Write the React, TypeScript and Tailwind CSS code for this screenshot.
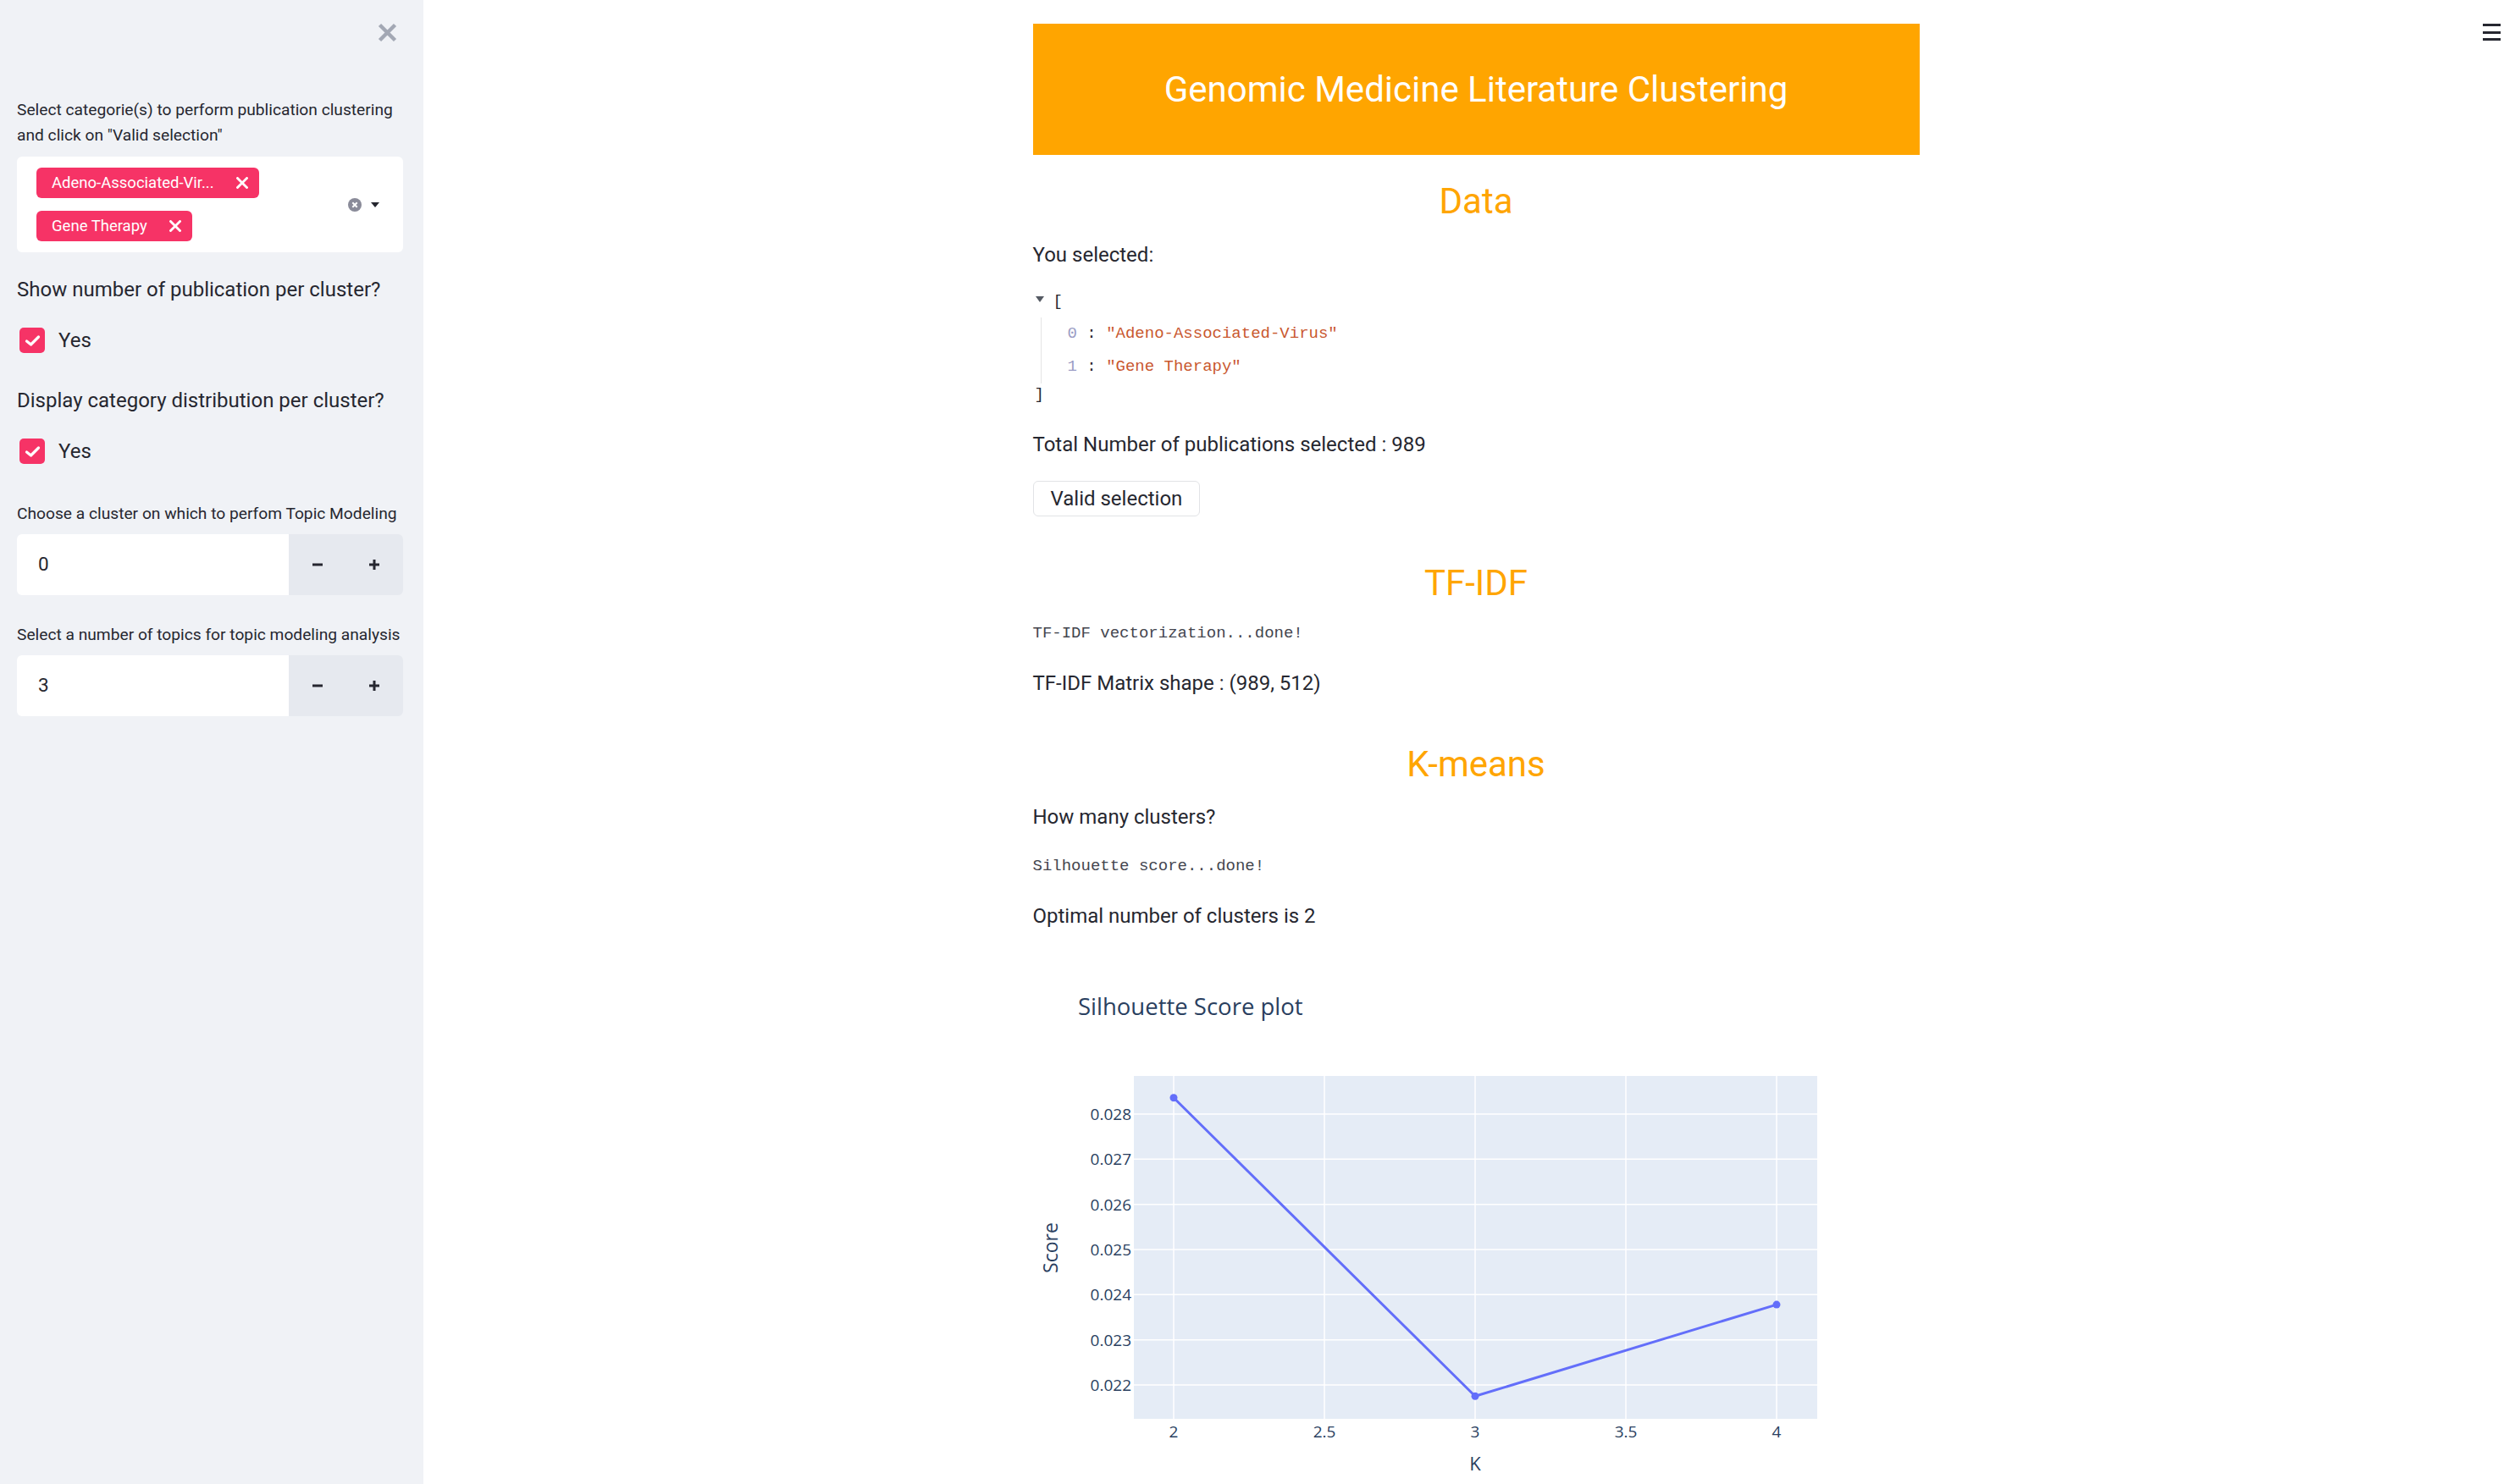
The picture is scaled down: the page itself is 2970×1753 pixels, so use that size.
import React from "react";

const PINK = "bg-[#f63366]";

const Tag = ({ label }: { label: string }) => {
    return (
        <div className={`${PINK} h-[36px] rounded-[6px] flex items-center pl-[18px] pr-[13px] gap-[26px] w-fit`}>
            <span className="text-white text-[18.5px] leading-none">{label}</span>
            <svg width="14" height="14" viewBox="0 0 14 14">
                <path d="M1.5 1.5 L12.5 12.5 M12.5 1.5 L1.5 12.5" stroke="white" strokeWidth="2.8" strokeLinecap="square" />
            </svg>
        </div>
    );
};

const CheckRow = () => {
    return (
        <div className="h-[36px] flex items-center">
            <div className={`${PINK} ml-[3px] w-[30px] h-[30px] rounded-[5px] flex items-center justify-center`}>
                <svg width="19" height="15" viewBox="0 0 19 15">
                    <path d="M2.5 8 L7.5 12 L16.5 3" fill="none" stroke="white" strokeWidth="3.2" strokeLinecap="round" strokeLinejoin="round" />
                </svg>
            </div>
            <span className="ml-[16px] text-[24px] text-[#262730]">Yes</span>
        </div>
    );
};

const NumberInput = ({ value }: { value: string }) => {
    return (
        <div className="mt-[9px] h-[72px] flex rounded-[6px] overflow-hidden">
            <div className="flex-1 bg-white flex items-center pl-[25px] text-[22.5px] text-[#262730]">{value}</div>
            <div className="w-[135px] bg-[#e6e9ef] flex">
                <div className="flex-1 flex items-center justify-center">
                    <svg width="14" height="14" viewBox="0 0 14 14">
                        <path d="M1 7 H13" stroke="#262730" strokeWidth="3" />
                    </svg>
                </div>
                <div className="flex-1 flex items-center justify-center">
                    <svg width="14" height="14" viewBox="0 0 14 14">
                        <path d="M1 7 H13 M7 1 V13" stroke="#262730" strokeWidth="3" />
                    </svg>
                </div>
            </div>
        </div>
    );
};

const Sidebar = () => {
    return (
        <div className="w-[500px] shrink-0 h-full bg-[#f0f2f6] flex flex-col pl-[20px] pr-[24px] text-[#262730]">
            <div className="h-[76px] flex justify-end items-start pt-[27px] pr-[7px]">
                <svg width="23" height="23" viewBox="0 0 23 23">
                    <path d="M2.5 2.5 L20.5 20.5 M20.5 2.5 L2.5 20.5" stroke="#a3a8b4" strokeWidth="4.5" />
                </svg>
            </div>
            <p className="mt-[39px] text-[19.2px] leading-[30px]">
                Select categorie(s) to perform publication clustering and click on "Valid selection"
            </p>
            <div className="mt-[10px] bg-white rounded-[6px] flex items-center pl-[23px] pr-[28px] py-[13px]">
                <div className="flex-1 flex flex-col gap-[15px]">
                    <Tag label="Adeno-Associated-Vir..." />
                    <Tag label="Gene Therapy" />
                </div>
                <div className="flex items-center gap-[11px]">
                    <svg width="16" height="16" viewBox="0 0 16 16">
                        <circle cx="8" cy="8" r="8" fill="#8a8b99" />
                        <path d="M5.3 5.3 L10.7 10.7 M10.7 5.3 L5.3 10.7" stroke="white" strokeWidth="2" />
                    </svg>
                    <svg width="10" height="6" viewBox="0 0 10 6">
                        <path d="M0 0 H10 L5 6 Z" fill="#262730" />
                    </svg>
                </div>
            </div>
            <p className="mt-[26px] text-[24px] leading-[36px]">Show number of publication per cluster?</p>
            <div className="mt-[24px]">
                <CheckRow />
            </div>
            <p className="mt-[35px] text-[24px] leading-[36px]">Display category distribution per cluster?</p>
            <div className="mt-[24px]">
                <CheckRow />
            </div>
            <p className="mt-[41px] text-[19.2px] leading-[30px]">Choose a cluster on which to perfom Topic Modeling</p>
            <NumberInput value="0" />
            <p className="mt-[32px] text-[19.2px] leading-[30px]">Select a number of topics for topic modeling analysis</p>
            <NumberInput value="3" />
        </div>
    );
};

const mono = "font-['Liberation_Mono',monospace]";

const JsonView = () => {
    return (
        <div className={`mt-[18px] ${mono} text-[19px] text-[#262730]`}>
            <div className="h-[38px] flex items-center">
                <div className="w-[24px] h-full flex items-center">
                    <svg className="ml-[3px] -mt-[6px]" width="10" height="7" viewBox="0 0 10 7">
                        <path d="M0 0 H10 L5 7 Z" fill="#555a63" />
                    </svg>
                </div>
                <span>[</span>
            </div>
            <div className="ml-[9px] border-l border-[#e4e4e4] pl-[31px]">
                <div className="h-[39px] flex items-center">
                    <span className="text-[#9a9cc4]">0</span>
                    <span className="whitespace-pre"> : </span>
                    <span className="text-[#c9582f]">"Adeno-Associated-Virus"</span>
                </div>
                <div className="h-[39px] flex items-center">
                    <span className="text-[#9a9cc4]">1</span>
                    <span className="whitespace-pre"> : </span>
                    <span className="text-[#c9582f]">"Gene Therapy"</span>
                </div>
            </div>
            <div className="h-[26px] flex items-center pl-[2px]">]</div>
        </div>
    );
};

const SilhouettePlot = () => {
    const gridX = [166, 344, 522, 700, 878];
    const xLabels = ["2", "2.5", "3", "3.5", "4"];
    const yLabels = ["0.028", "0.027", "0.026", "0.025", "0.024", "0.023", "0.022"];
    const gridY = yLabels.map((_, i) => 186 + i * 53.33);
    const pts = [
        [166, 166.8],
        [522, 519.3],
        [878, 411.1],
    ];
    const font = "'Open Sans', sans-serif";
    return (
        <svg className="mt-[30px]" width="1047" height="623" viewBox="0 0 1047 623">
            <text x="53" y="69" fontFamily={font} fontSize="27.5" fill="#2a3f5f">
                Silhouette Score plot
            </text>
            <rect x="119" y="141" width="807" height="405" fill="#e5ecf6" />
            {gridX.map((x) => (
                <line key={"gx" + x} x1={x} x2={x} y1="141" y2="546" stroke="white" strokeWidth="1.5" />
            ))}
            {gridY.map((y) => (
                <line key={"gy" + y} x1="119" x2="926" y1={y} y2={y} stroke="white" strokeWidth="1.5" />
            ))}
            {yLabels.map((l, i) => (
                <text key={l} x="116" y={gridY[i] + 7} textAnchor="end" fontFamily={font} fontSize="19" fill="#2a3f5f">
                    {l}
                </text>
            ))}
            {xLabels.map((l, i) => (
                <text key={l} x={gridX[i]} y="568" textAnchor="middle" fontFamily={font} fontSize="19" fill="#2a3f5f">
                    {l}
                </text>
            ))}
            <text x="522" y="607" textAnchor="middle" fontFamily={font} fontSize="22" fill="#2a3f5f">
                K
            </text>
            <text x="29" y="344" textAnchor="middle" transform="rotate(-90 29 344)" fontFamily={font} fontSize="23" fill="#2a3f5f">
                Score
            </text>
            <polyline
                points={pts.map((p) => p.join(",")).join(" ")}
                fill="none"
                stroke="#636efa"
                strokeWidth="3"
                strokeLinejoin="round"
            />
            {pts.map((p) => (
                <circle key={p[0]} cx={p[0]} cy={p[1]} r="4.5" fill="#636efa" />
            ))}
        </svg>
    );
};

const Heading = ({ text, mt }: { text: string; mt: string }) => {
    return <h2 className={`${mt} h-[60px] leading-[60px] text-center text-[42px] text-[#ffa500]`}>{text}</h2>;
};

const App = () => {
    return (
        <div className="relative w-[2970px] h-[1753px] overflow-hidden flex bg-white font-['Roboto',sans-serif] text-[#262730]">
            <Sidebar />
            <div className="flex-1 pl-[16px]">
                <div className="w-[1047px] mx-auto flex flex-col">
                    <div className="mt-[28px] h-[155px] bg-[#ffa500] flex items-center justify-center">
                        <h1 className="text-white text-[42px]">Genomic Medicine Literature Clustering</h1>
                    </div>
                    <Heading text="Data" mt="mt-[25px]" />
                    <p className="mt-[15px] text-[24px] leading-[36px]">You selected:</p>
                    <JsonView />
                    <p className="mt-[28px] text-[24px] leading-[36px]">Total Number of publications selected : 989</p>
                    <button className="mt-[25px] w-fit h-[42px] px-[20px] border border-[#e2e3e6] rounded-[6px] bg-white text-[24px] leading-none text-[#262730]">
                        Valid selection
                    </button>
                    <Heading text="TF-IDF" mt="mt-[49px]" />
                    <p className={`mt-[14px] ${mono} text-[19px] leading-[30px] text-[#44464f]`}>TF-IDF vectorization...done!</p>
                    <p className="mt-[26px] text-[24px] leading-[36px]">TF-IDF Matrix shape : (989, 512)</p>
                    <Heading text="K-means" mt="mt-[48px]" />
                    <p className="mt-[14px] text-[24px] leading-[36px]">How many clusters?</p>
                    <p className={`mt-[25px] ${mono} text-[19px] leading-[30px] text-[#44464f]`}>Silhouette score...done!</p>
                    <p className="mt-[26px] text-[24px] leading-[36px]">Optimal number of clusters is 2</p>
                    <SilhouettePlot />
                </div>
            </div>
            <div className="absolute top-[28px] right-[17px] w-[21px] h-[20px] flex flex-col justify-between">
                <div className="h-[3px] bg-[#262730]" />
                <div className="h-[3px] bg-[#262730]" />
                <div className="h-[3px] bg-[#262730]" />
            </div>
        </div>
    );
};

export default App;
